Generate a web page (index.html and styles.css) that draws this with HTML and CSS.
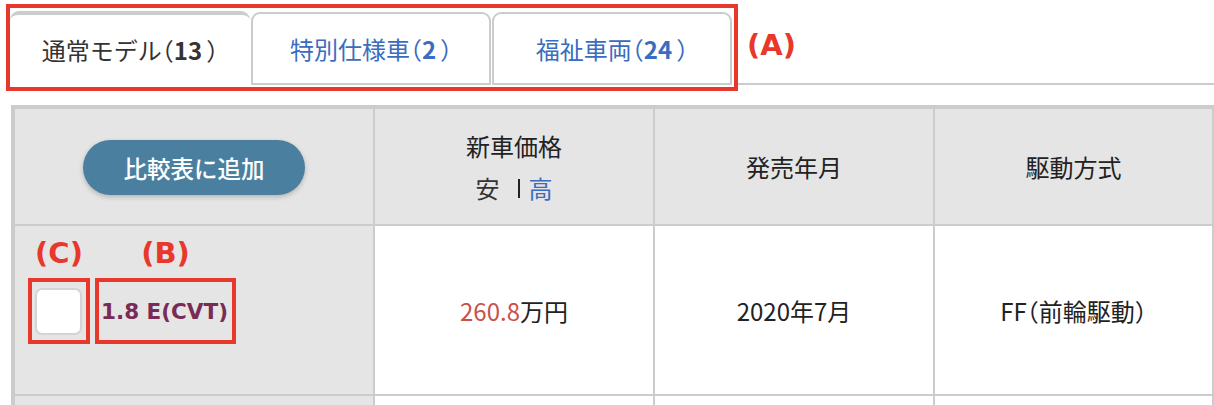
FILE: index.html
```html
<!DOCTYPE html>
<html lang="ja">
<head>
<meta charset="utf-8">
<title>グレード一覧</title>
<link rel="stylesheet" href="styles.css">
</head>
<body>
<div class="page">
  <div class="tabbar">
    <div class="annot annot-tabs">
      <div class="tabs">
        <div class="tab tab-active">通常モデル<span class="half">（<b>13</b>）</span></div>
        <div class="tab">特別仕様車<span class="half">（<b>2</b>）</span></div>
        <div class="tab">福祉車両<span class="half">（<b>24</b>）</span></div>
      </div>
    </div>
    <div class="tabrest"><span class="label label-a">(A)</span></div>
  </div>

  <table class="spec">
    <colgroup>
      <col class="c1"><col class="c2"><col class="c3"><col class="c4">
    </colgroup>
    <thead>
      <tr class="head">
        <th class="gray"><button class="btn-add" type="button">比較表に追加</button></th>
        <th class="gray">
          <div class="h-line">新車価格</div>
          <div class="h-line sort"><span class="sort-lo">安</span><span class="sort-bar"></span><span class="sort-hi">高</span></div>
        </th>
        <th class="gray">発売年月</th>
        <th class="gray">駆動方式</th>
      </tr>
    </thead>
    <tbody>
      <tr class="row">
        <td class="gray namecell">
          <div class="namewrap">
            <div class="annot annot-c">
              <span class="label label-over">(C)</span>
              <span class="check"></span>
            </div>
            <div class="annot annot-b">
              <span class="label label-over">(B)</span>
              <span class="grade">1.8 E(CVT)</span>
            </div>
          </div>
        </td>
        <td><span class="price">260.8</span>万円</td>
        <td>2020年7月</td>
        <td>FF<span class="half">（前輪駆動）</span></td>
      </tr>
      <tr class="row next">
        <td class="gray"></td>
        <td></td>
        <td></td>
        <td></td>
      </tr>
    </tbody>
  </table>
</div>
</body>
</html>
```

FILE: styles.css
```css
html, body {
  margin: 0;
  padding: 0;
  background: #fff;
}
body {
  font-family: "Noto Sans CJK JP", "Noto Sans", sans-serif;
  color: #222;
  font-size: 24px;
  overflow: hidden;
}
.page {
  padding-top: 4px;
}
.half {
  font-feature-settings: "halt";
}

/* ---------- tabs ---------- */
.tabbar {
  display: flex;
  align-items: flex-start;
  padding-left: 6px;
}
.annot {
  border: 4px solid #e8382b;
}
.annot-tabs {
  padding: 3px 2px 2px 0;
}
.tabs {
  display: flex;
  align-items: flex-end;
  gap: 1px;
  height: 74px;
}
.tab {
  box-sizing: border-box;
  width: 240px;
  height: 73px;
  border: 2px solid #ccc;
  border-radius: 9px 9px 0 0;
  background: #fff;
  color: #3a6cc0;
  display: flex;
  align-items: center;
  justify-content: center;
}
.tab b {
  font-weight: 700;
  padding: 0 4px 0 0;
}
.tab-active {
  height: 74px;
  border: 0;
  border-top: 4px solid #ccc;
  color: #333;
  padding-bottom: 2px;
}
.tabrest {
  flex: 1;
  height: 79px;
  border-bottom: 2px solid #ccc;
  display: flex;
  align-items: center;
  padding-left: 9px;
}
.label {
  font-family: "DejaVu Sans", sans-serif;
  font-weight: 700;
  color: #e8382b;
  font-size: 29px;
  line-height: 1;
  white-space: nowrap;
}
.label-a {
  margin-top: 4px;
}

/* ---------- table ---------- */
.spec {
  margin: 14px 0 0 11px;
  width: 1203px;
  table-layout: fixed;
  border-collapse: separate;
  border-spacing: 0;
  border-top: 4px solid #ccc;
  border-left: 4px solid #ccc;
}
.c1 { width: 360px; }
.c2 { width: 280px; }
.c3 { width: 280px; }
.c4 { width: 279px; }
.spec th,
.spec td {
  border-right: 2px solid #ccc;
  border-bottom: 2px solid #ccc;
  padding: 0;
  text-align: center;
  vertical-align: middle;
  font-weight: 400;
  color: #222;
}
.gray {
  background: #e5e5e5;
}
.head th {
  height: 115px;
}
.row td {
  height: 168px;
}
.row.next td {
  height: 40px;
}

.btn-add {
  font-family: inherit;
  font-size: 23.5px;
  font-weight: 500;
  color: #fff;
  background: #4a7f9f;
  border: 0;
  border-radius: 28px;
  width: 222px;
  height: 55px;
  box-shadow: 0 2px 5px rgba(0, 0, 0, 0.22);
  cursor: pointer;
  margin-top: 2px;
}

.h-line {
  line-height: 42px;
}
.sort {
  display: flex;
  align-items: center;
  justify-content: center;
  color: #333;
}
.sort-lo {
  padding-right: 18px;
}
.sort-bar {
  width: 2px;
  height: 19px;
  background: #222;
  margin-top: 2px;
}
.sort-hi {
  padding-left: 9px;
  color: #3a6cc0;
}

/* ---------- name cell ---------- */
.namecell {
  text-align: left !important;
  padding-left: 13px !important;
}
.namewrap {
  display: flex;
  align-items: stretch;
  gap: 5px;
  margin-top: 2px;
}
.annot-c,
.annot-b {
  position: relative;
  height: 58px;
  display: flex;
  align-items: center;
}
.annot-c {
  padding: 0 4px 0 3px;
}
.annot-b {
  padding: 0 4px 0 2px;
}
.label-over {
  position: absolute;
  left: 0;
  right: 0;
  bottom: 100%;
  margin-bottom: 14px;
  text-align: center;
}
.check {
  display: block;
  box-sizing: border-box;
  width: 47px;
  height: 47px;
  background: #fff;
  border: 2px solid #d4d4d4;
  border-radius: 7px;
}
.grade {
  font-family: "DejaVu Sans", sans-serif;
  font-weight: 700;
  color: #7a2b55;
  font-size: 21.5px;
}
.price {
  color: #c9514a;
}
```
